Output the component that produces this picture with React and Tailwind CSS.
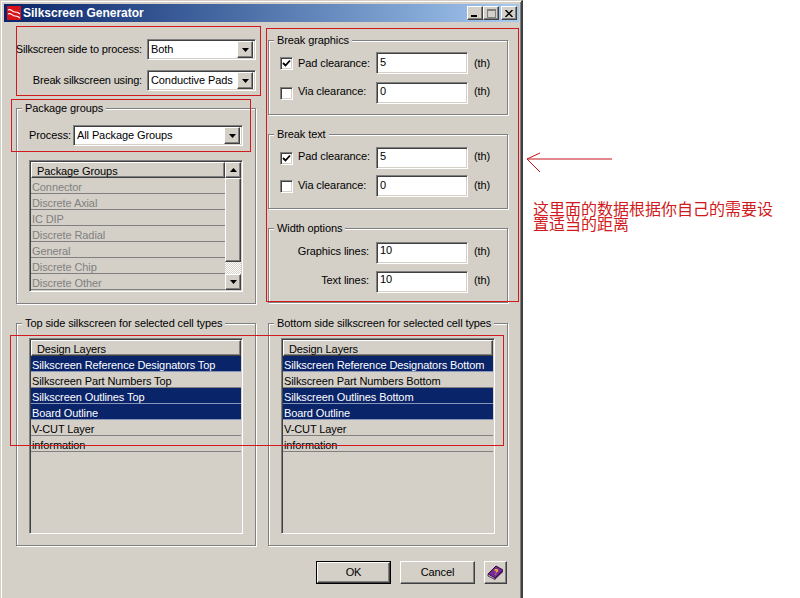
const RAISED = "bg-[#d4d0c8] border border-t-white border-l-white border-r-[#404040] border-b-[#404040] shadow-[inset_-1px_-1px_0_#808080]";
const SUNKEN = "border border-t-[#808080] border-l-[#808080] border-r-white border-b-white shadow-[inset_1px_1px_0_#404040,inset_-1px_-1px_0_#d4d0c8]";

function Arrow({ up = false }) {
  return (
    <svg width="7" height="4" viewBox="0 0 7 4" className={up ? "rotate-180" : ""}>
      <path d="M0 0h7L3.5 4z" fill="#000" />
    </svg>
  );
}

function Combo({ value, className = "" }) {
  return (
    <div className={`${SUNKEN} bg-white h-[21px] flex items-center pl-[3px] pr-[2px] leading-none ${className}`}>
      <span className="flex-1 min-w-0 whitespace-nowrap overflow-hidden">{value}</span>
      <div className={`${RAISED} w-[16px] h-[17px] flex items-center justify-center shrink-0`}>
        <Arrow />
      </div>
    </div>
  );
}

function Group({ title, className = "", children }) {
  return (
    <div className={`relative border border-[#808080] shadow-[1px_1px_0_#fff,inset_1px_1px_0_#fff] ${className}`}>
      <span className="absolute -top-[8px] left-[5px] bg-[#d4d0c8] px-[3px] leading-[15px] whitespace-nowrap">{title}</span>
      {children}
    </div>
  );
}

function Row({ children, tone = "" }) {
  return (
    <div className={`h-[16px] leading-[18px] pl-[1px] border-b whitespace-nowrap overflow-hidden ${tone}`}>{children}</div>
  );
}

function Header({ children }) {
  return (
    <div className={`${RAISED} h-[16px] leading-[16px] pl-[5px] whitespace-nowrap overflow-hidden`}>{children}</div>
  );
}

function ClearanceRow({ label, checked, value, lift = "", inputLeading = "leading-[18px]", className = "" }) {
  return (
    <div className={`flex items-center h-[22px] ${className}`}>
      <div className={`${SUNKEN} ml-[11px] w-[13px] h-[13px] bg-white flex items-center justify-center shrink-0`}>
        {checked && (
          <svg width="9" height="9" viewBox="0 0 9 9">
            <path d="M1 4l2.5 2.5L8 1.5" fill="none" stroke="#000" strokeWidth="1.8" />
          </svg>
        )}
      </div>
      <span className={`ml-[5px] w-[78px] whitespace-nowrap ${lift}`}>{label}</span>
      <div className={`${SUNKEN} w-[92px] h-[22px] bg-white pl-[3px] ${inputLeading}`}>{value}</div>
      <span className={`ml-[6px] ${lift}`}>(th)</span>
    </div>
  );
}

function WidthRow({ label, value, className = "" }) {
  return (
    <div className={`flex items-center h-[22px] ${className}`}>
      <span className="w-[100px] text-right whitespace-nowrap mb-[4px]">{label}</span>
      <div className={`${SUNKEN} ml-[7px] w-[92px] h-[22px] bg-white pl-[3px] leading-[15px]`}>{value}</div>
      <span className="ml-[6px] mb-[4px]">(th)</span>
    </div>
  );
}

function LayerList({ rows }) {
  return (
    <div className={`${SUNKEN} mx-[12px] mt-[14px] h-[196px] p-[1px] bg-[#d4d0c8]`}>
      <Header>Design Layers</Header>
      {rows.map(([t, sel]) => (
        <Row key={t} tone={sel ? "bg-[#0a246a] text-white border-[#8a94b8]" : "border-[#808080]"}>{t}</Row>
      ))}
    </div>
  );
}

const packages = ["Connector", "Discrete Axial", "IC DIP", "Discrete Radial", "General", "Discrete Chip", "Discrete Other"];

export default function App() {
  return (
    <div className="relative flex w-[800px] h-[598px] bg-white overflow-hidden text-[11px] tracking-[-0.1px] text-black font-['Liberation_Sans','Noto_Sans_CJK_SC',sans-serif]">
      {/* Dialog window */}
      <div className="w-[523px] h-[598px] shrink-0 bg-[#d4d0c8] border-l border-t border-r-2 border-l-[#d4d0c8] border-t-[#d4d0c8] border-r-[#404040] shadow-[inset_1px_1px_0_#fff,inset_-1px_0_0_#808080] pt-[3px] pl-[3px] pr-[2px] flex flex-col">
        <div className="h-[18px] flex items-center bg-gradient-to-r from-[#0a246a] to-[#a6caf0] pl-[3px] pr-[2px] shrink-0">
          <svg width="14" height="14" viewBox="0 0 14 14" className="shrink-0">
            <rect width="14" height="14" fill="#d8121a" />
            <path d="M1 4c3-2 4 2 7 2s3 1 5 2M1 8c3-2 4 2 7 2s3 1 5 2" fill="none" stroke="#fff" strokeWidth="1.2" />
          </svg>
          <span className="ml-[2px] flex-1 font-bold text-[12px] tracking-normal text-white whitespace-nowrap">Silkscreen Generator</span>
          <div className={`${RAISED} w-[16px] h-[14px] flex items-end justify-start pl-[3px] pb-[2px]`}>
            <div className="w-[6px] h-[2px] bg-black" />
          </div>
          <div className={`${RAISED} w-[16px] h-[14px] flex items-center justify-center`}>
            <div className="w-[9px] h-[9px] border border-t-2 border-[#808080]" />
          </div>
          <div className={`${RAISED} w-[16px] h-[14px] ml-[2px] flex items-center justify-center`}>
            <svg width="8" height="7" viewBox="0 0 8 7">
              <path d="M0.5 0l7 7M7.5 0l-7 7" stroke="#000" strokeWidth="1.5" />
            </svg>
          </div>
        </div>

        <div className="pl-[12px] pr-[11px] flex flex-col">
          <div className="grid grid-cols-[240px_240px] gap-x-[12px] pt-[17px]">
            {/* Left column */}
            <div className="flex flex-col">
              <div className="flex items-center justify-end gap-[5px]">
                <span className="whitespace-nowrap tracking-[-0.17px]">Silkscreen side to process:</span>
                <Combo value="Both" className="w-[109px] shrink-0" />
              </div>
              <div className="flex items-center justify-end gap-[5px] mt-[10px]">
                <span className="whitespace-nowrap tracking-[-0.17px]">Break silkscreen using:</span>
                <Combo value="Conductive Pads" className="w-[109px] shrink-0" />
              </div>
              <Group title="Package groups" className="mt-[17px] h-[196px]">
                <div className="flex items-center gap-[2px] pl-[12px] pr-[12px] mt-[16px]">
                  <span>Process:</span>
                  <Combo value="All Package Groups" className="flex-1" />
                </div>
                <div className={`${SUNKEN} mx-[12px] mt-[14px] h-[132px] p-[1px] flex bg-[#d4d0c8]`}>
                  <div className="flex-1 min-w-0">
                    <Header>Package Groups</Header>
                    {packages.map((t) => (
                      <Row key={t} tone="text-[#808080] border-[#808080]">{t}</Row>
                    ))}
                  </div>
                  <div className="w-[16px] flex flex-col shrink-0">
                    <div className={`${RAISED} h-[16px] flex items-center justify-center`}><Arrow up /></div>
                    <div className={`${RAISED} h-[84px]`} />
                    <div className="flex-1 bg-[repeating-conic-gradient(#fff_0_25%,#d4d0c8_0_50%)] bg-[length:2px_2px]" />
                    <div className={`${RAISED} h-[16px] flex items-center justify-center`}><Arrow /></div>
                  </div>
                </div>
              </Group>
            </div>

            {/* Right column */}
            <div className="flex flex-col pt-[1px]">
              <Group title="Break graphics" className="h-[75px] pt-[11px]">
                <ClearanceRow label="Pad clearance:" checked value="5" />
                <ClearanceRow label="Via clearance:" value="0" lift="mb-[4px]" inputLeading="leading-[16px]" className="mt-[8px]" />
              </Group>
              <Group title="Break text" className="mt-[19px] h-[75px] pt-[12px]">
                <ClearanceRow label="Pad clearance:" checked value="5" lift="mb-[4px]" inputLeading="leading-[16px]" />
                <ClearanceRow label="Via clearance:" value="0" lift="mb-[2px]" className="mt-[6px]" />
              </Group>
              <Group title="Width options" className="mt-[19px] h-[75px] pt-[13px]">
                <WidthRow label="Graphics lines:" value="10" />
                <WidthRow label="Text lines:" value="10" className="mt-[7px]" />
              </Group>
            </div>
          </div>

          <div className="grid grid-cols-[240px_240px] gap-x-[12px] mt-[19px]">
            <Group title="Top side silkscreen for selected cell types" className="h-[223px]">
              <LayerList rows={[["Silkscreen Reference Designators Top", true], ["Silkscreen Part Numbers Top", false], ["Silkscreen Outlines Top", true], ["Board Outline", true], ["V-CUT Layer", false], ["information", false]]} />
            </Group>
            <Group title="Bottom side silkscreen for selected cell types" className="h-[223px]">
              <LayerList rows={[["Silkscreen Reference Designators Bottom", true], ["Silkscreen Part Numbers Bottom", false], ["Silkscreen Outlines Bottom", true], ["Board Outline", true], ["V-CUT Layer", false], ["information", false]]} />
            </Group>
          </div>

          <div className="flex justify-end gap-[9px] mt-[15px] mr-[1px]">
            <div className="border border-black w-[75px] h-[23px]">
              <div className={`${RAISED} w-full h-full flex items-center justify-center`}>OK</div>
            </div>
            <div className={`${RAISED} w-[75px] h-[23px] flex items-center justify-center`}>Cancel</div>
            <div className={`${RAISED} w-[23px] h-[23px] flex items-center justify-center`}>
              <svg width="17" height="15" viewBox="0 0 17 15">
                <path d="M1 9L9 1l7 4-8 8z" fill="#7a2a96" stroke="#2a0a3a" strokeWidth="1" />
                <path d="M1 9l7 4v1.5L1 11z" fill="#d8d0e8" stroke="#2a0a3a" strokeWidth="0.8" />
                <path d="M8 13l8-8v2l-8 7.5z" fill="#4a1a66" />
                <path d="M7.5 5.5c1-1.5 3-1 3 0s-1.5 1-1.5 2M8.5 9l.5.5" fill="none" stroke="#f4d020" strokeWidth="1.3" />
              </svg>
            </div>
          </div>
        </div>
      </div>

      {/* Annotation note */}
      <div className="flex-1 min-w-0 pl-[1px] pt-[151px]">
        <svg width="90" height="22" viewBox="0 0 90 22" className="block">
          <path d="M88 8H3M16 2L3 8l13 13" fill="none" stroke="#c8141e" strokeWidth="1" />
        </svg>
        <p className="ml-[9px] mt-[28px] w-[243px] text-[16px] tracking-normal leading-[15px] text-[#d01a20] font-['Noto_Sans_CJK_SC','Liberation_Sans',sans-serif]">这里面的数据根据你自己的需要设置适当的距离</p>
      </div>

      {/* Red highlight rectangles drawn over the screenshot */}
      <div className="absolute z-10 left-[16px] top-[26px] w-[245px] h-[70px] border border-[#d01a20]" />
      <div className="absolute z-10 left-[11px] top-[99px] w-[240px] h-[53px] border border-[#d01a20]" />
      <div className="absolute z-10 left-[266px] top-[28px] w-[253px] h-[274px] border border-[#d01a20]" />
      <div className="absolute z-10 left-[10px] top-[335px] w-[494px] h-[111px] border border-[#d01a20]" />
    </div>
  );
}
